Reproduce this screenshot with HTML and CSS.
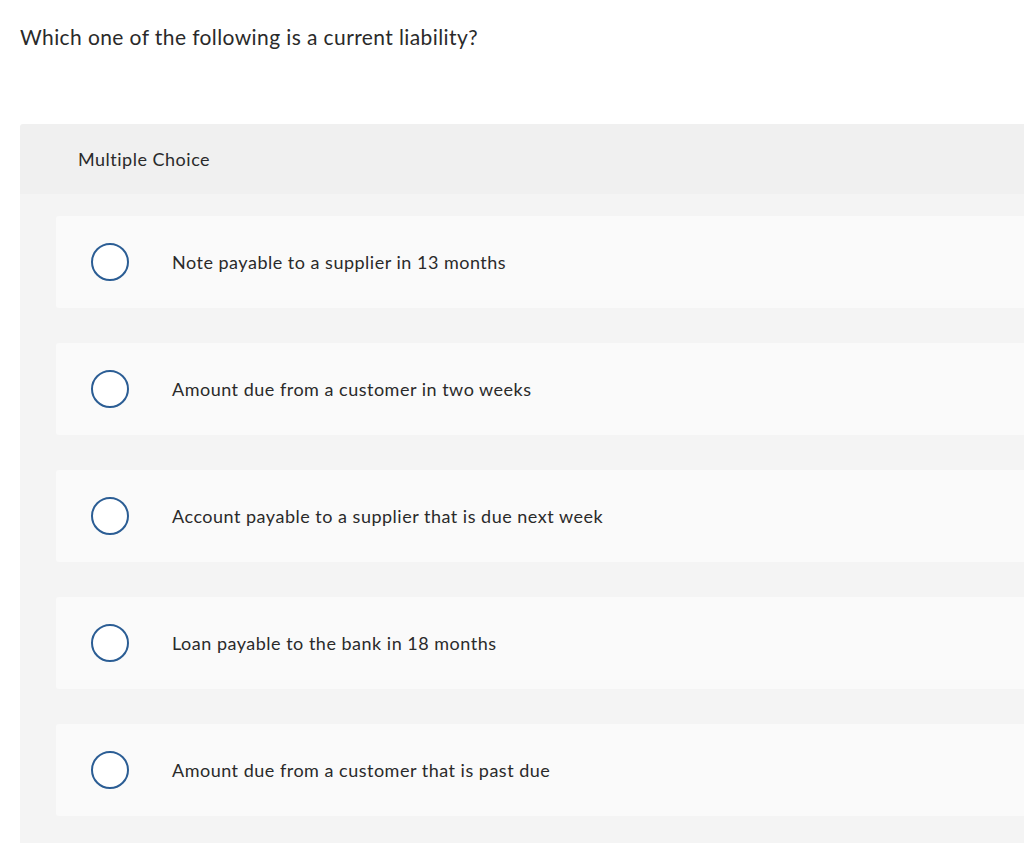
FILE: index.html
```html
<!DOCTYPE html>
<html>
<head>
<meta charset="utf-8">
<link rel="stylesheet" href="styles.css">
</head>
<body>
<div class="question">Which one of the following is a current liability?</div>
<div class="mc">
  <div class="mc-head">Multiple Choice</div>
  <div class="mc-body">
    <div class="choice"><span class="radio"></span><span class="label">Note payable to a supplier in 13 months</span></div>
    <div class="choice"><span class="radio"></span><span class="label">Amount due from a customer in two weeks</span></div>
    <div class="choice"><span class="radio"></span><span class="label">Account payable to a supplier that is due next week</span></div>
    <div class="choice"><span class="radio"></span><span class="label">Loan payable to the bank in 18 months</span></div>
    <div class="choice"><span class="radio"></span><span class="label">Amount due from a customer that is past due</span></div>
  </div>
</div>
</body>
</html>
```
FILE: styles.css
```css
html, body {
  margin: 0;
  padding: 0;
  background: #fff;
}
body {
  font-family: "Lato", "Liberation Sans", sans-serif;
  color: #2a2a2a;
  width: 1024px;
  height: 862px;
  overflow: hidden;
}
.question {
  padding: 24px 0 0 20px;
  font-size: 21px;
  line-height: 26px;
  letter-spacing: 0.4px;
  height: 124px;
  box-sizing: border-box;
}
.mc {
  margin-left: 20px;
  width: 1020px;
}
.mc-head {
  background: #f0f0f0;
  height: 70px;
  display: flex;
  align-items: center;
  padding-left: 58px;
  font-size: 18px;
  letter-spacing: 0.5px;
  border-top-left-radius: 3px;
}
.mc-body {
  background: #f4f4f4;
  padding: 22px 0 27px 36px;
  display: flex;
  flex-direction: column;
  gap: 35px;
}
.choice {
  background: #fafafa;
  height: 92px;
  border-radius: 3px 0 0 3px;
  display: flex;
  align-items: center;
  padding-left: 35px;
}
.radio {
  width: 38px;
  height: 38px;
  box-sizing: border-box;
  border: 2px solid #2b5d94;
  border-radius: 50%;
  background: #fff;
  flex: none;
}
.label {
  margin-left: 43px;
  font-size: 18px;
  letter-spacing: 0.5px;
}
```
